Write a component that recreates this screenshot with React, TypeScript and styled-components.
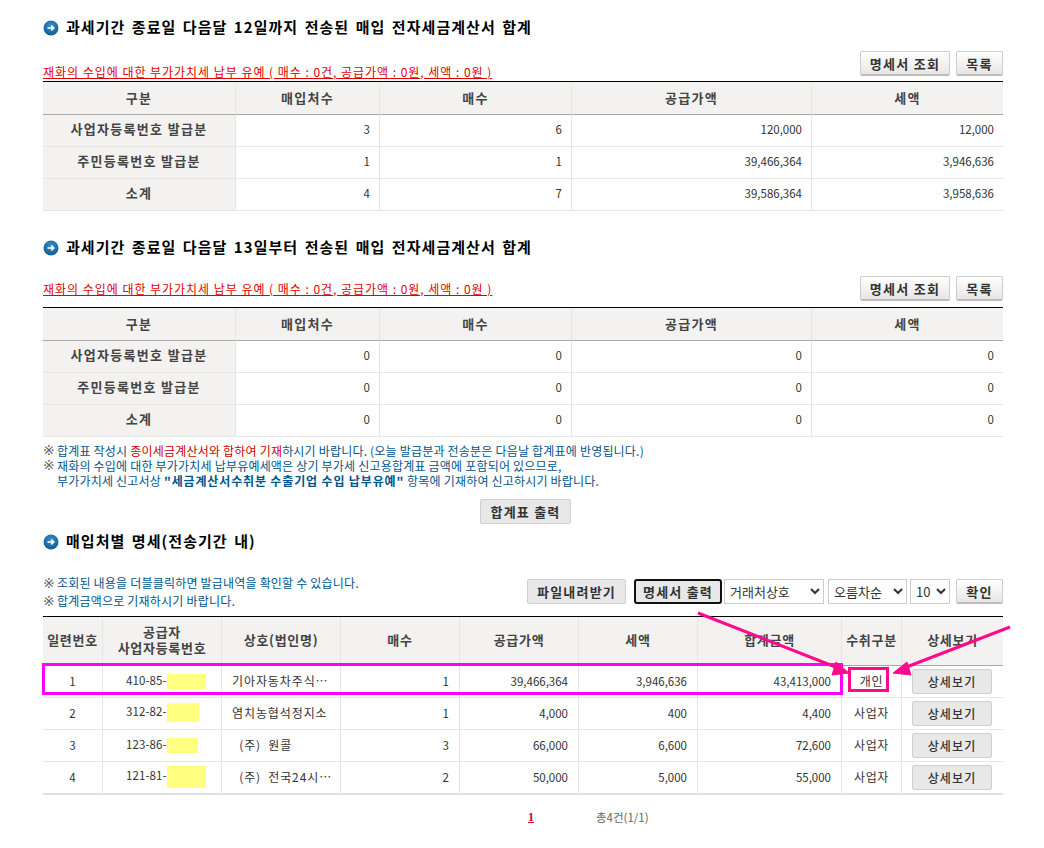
import React from "react";
import styled, { createGlobalStyle } from "styled-components";

const GlobalStyle = createGlobalStyle`
  html, body {
    margin: 0;
    padding: 0;
    background: #fff;
  }
  body {
    font-family: "Noto Sans CJK KR", "Liberation Sans", sans-serif;
    font-size: 12px;
    color: #333;
  }
`;

const Page = styled.div`
  position: relative;
  width: 1044px;
  height: 848px;
  padding: 19px 41px 0 43px;
  box-sizing: border-box;
  overflow: hidden;
`;

const Title = styled.h2<{ $top: number }>`
  display: flex;
  align-items: center;
  gap: 7px;
  height: 18px;
  margin: ${(p) => p.$top}px 0 0;
  font-size: 15px;
  font-weight: 700;
  color: #000;
  letter-spacing: 1.05px;
  word-spacing: 2px;
  white-space: nowrap;
`;

const TitleText = styled.span`
  line-height: 18px;
  padding-bottom: 3px;
`;

const Toolbar = styled.div<{ $top: number; $h: number; $align: string }>`
  display: flex;
  justify-content: space-between;
  align-items: ${(p) => p.$align};
  height: ${(p) => p.$h}px;
  margin-top: ${(p) => p.$top}px;
`;

const RedLink = styled.a`
  color: #e00000;
  text-decoration: underline;
  letter-spacing: 0.97px;
  line-height: 14px;
  white-space: nowrap;
`;

const Buttons = styled.div`
  display: flex;
  gap: 6px;
  align-self: flex-start;
`;

const Button = styled.button<{ $w: number; $ml?: number }>`
  width: ${(p) => p.$w}px;
  height: 25px;
  margin-left: ${(p) => p.$ml ?? 0}px;
  padding: 0;
  border: 1px solid #ccc;
  border-bottom: 2px solid #bbb;
  border-radius: 2px;
  background: linear-gradient(#fff, #e6e6e6);
  font: 700 13px "Noto Sans CJK KR", sans-serif;
  letter-spacing: 1.3px;
  color: #333;
`;

const FlatButton = styled.button<{ $w: number; $ml?: number; $focus?: boolean }>`
  width: ${(p) => p.$w}px;
  height: 25px;
  margin-left: ${(p) => p.$ml ?? 0}px;
  padding: 0;
  border: 1px solid #d0d0d0;
  border-radius: 2px;
  background: #e8e8e8;
  font: 700 13px "Noto Sans CJK KR", sans-serif;
  letter-spacing: 1.2px;
  color: #333;
  ${(p) => p.$focus && "border: 2px solid #111; border-radius: 3px; box-sizing: border-box;"}
`;

const Table = styled.table<{ $top?: number }>`
  width: 960px;
  margin-top: ${(p) => p.$top ?? 0}px;
  border-collapse: separate;
  border-spacing: 0;
  table-layout: fixed;
  border-top: 1px solid #000;
`;

const ListTable = styled(Table)`
  tbody tr:last-child td {
    border-bottom: 2px solid #e0e0e0;
  }
`;

const Th = styled.th<{ $h: number; $ls?: number; $lift: number }>`
  height: ${(p) => p.$h - p.$lift}px;
  padding: 0 0 ${(p) => p.$lift}px;
  background: #f3f2f0;
  border-right: 1px solid #e6e6e6;
  border-bottom: 1px solid #aaa;
  font-size: 13px;
  font-weight: 700;
  line-height: 16px;
  letter-spacing: ${(p) => p.$ls ?? 1.3}px;
  color: #444;
  white-space: nowrap;
  &:last-child {
    border-right: 0;
  }
`;

const RowHead = styled.th`
  height: 27px;
  padding: 0 0 4px;
  background: #f3f2f0;
  border-right: 1px solid #e6e6e6;
  border-bottom: 1px solid #e6e6e6;
  font-size: 13px;
  font-weight: 700;
  letter-spacing: 1.3px;
  color: #444;
`;

const Td = styled.td<{ $align?: string; $pad?: number; $lift?: number }>`
  height: ${(p) => 31 - (p.$lift ?? 2)}px;
  padding: 0 ${(p) => p.$pad ?? 0}px ${(p) => p.$lift ?? 2}px 0;
  text-align: ${(p) => p.$align ?? "right"};
  border-right: 1px solid #e6e6e6;
  border-bottom: 1px solid #e6e6e6;
  font-size: 11.5px;
  color: #333;
  white-space: nowrap;
  &:last-child {
    border-right: 0;
  }
`;

const BizCell = styled(Td)`
  padding-left: 23px;
  text-align: left;
  letter-spacing: 0.1px;
`;

const NameCell = styled(Td)`
  padding-left: 10px;
  text-align: left;
  font-size: 12px;
  letter-spacing: 0.9px;
  white-space: pre;
`;

const KindCell = styled(Td)`
  text-align: center;
  font-size: 12px;
  letter-spacing: 0.6px;
`;

const Mask = styled.span<{ $w: number; $h: number }>`
  display: inline-block;
  width: ${(p) => p.$w}px;
  height: ${(p) => p.$h}px;
  background: #ffff80;
  vertical-align: middle;
`;

const DetailButton = styled(FlatButton)`
  display: block;
  margin: 0 auto 0 10px;
  font-size: 12px;
  font-weight: 500;
  letter-spacing: 1.1px;
`;

const Notes = styled.div`
  margin-top: 6px;
  color: #00558c;
  line-height: 15px;
  letter-spacing: 0.2px;
  white-space: nowrap;
  b {
    letter-spacing: 0.85px;
  }
`;

const Note = styled.div`
  display: flex;
  align-items: center;
  height: 15px;
`;

const Mark = styled.span`
  flex: none;
  width: 14px;
  font-family: "DejaVu Sans", sans-serif;
  font-size: 14px;
  line-height: 15px;
  color: #666;
  letter-spacing: 0;
`;

const Indent = styled.div`
  height: 15px;
  padding-left: 14px;
`;

const RedText = styled.span`
  color: #d00000;
`;

const Center = styled.div`
  display: flex;
  justify-content: center;
  margin: 11px 0 0 5px;
`;

const ListBar = styled.div`
  display: flex;
  justify-content: space-between;
  align-items: center;
  margin-top: 28px;
  height: 28px;
`;

const ListNotes = styled(Notes)`
  margin: 0 0 2px;
  line-height: 18px;
`;

const ListNote = styled(Note)`
  height: 18px;
`;

const Controls = styled.div`
  display: flex;
  align-items: flex-start;
  align-self: flex-start;
`;

const Select = styled.select<{ $w: number; $ml: number }>`
  width: ${(p) => p.$w}px;
  height: 25px;
  margin-left: ${(p) => p.$ml}px;
  padding: 0 0 0 1px;
  border: 1px solid #ccc;
  border-radius: 0;
  background: #fff;
  font: 13px "Noto Sans CJK KR", sans-serif;
  color: #333;
`;

const Pager = styled.div`
  display: flex;
  align-items: center;
  height: 16px;
  margin: 14px 0 0 485px;
  gap: 62px;
`;

const PageNum = styled.a`
  font: 700 12px "Liberation Serif", serif;
  color: #d00030;
  text-decoration: underline;
`;

const Total = styled.span`
  font-size: 11.5px;
  color: #666;
`;

const HighlightRow = styled.div`
  position: absolute;
  left: 42px;
  top: 663px;
  width: 795px;
  height: 26px;
  border: 3px solid #ff00ff;
`;

const HighlightCell = styled.div`
  position: absolute;
  left: 848px;
  top: 667px;
  width: 35px;
  height: 19px;
  border: 3px solid #ff0a8c;
`;

const ArrowLayer = styled.svg`
  position: absolute;
  left: 0;
  top: 0;
  pointer-events: none;
`;

const Bullet = () => (
  <svg width="16" height="16" viewBox="0 0 16 16">
    <defs>
      <radialGradient id="ball" cx="50%" cy="35%" r="65%">
        <stop offset="0" stopColor="#3f8fca" />
        <stop offset="1" stopColor="#0d5a96" />
      </radialGradient>
    </defs>
    <circle cx="8" cy="8" r="7.5" fill="url(#ball)" />
    <path d="M4.5 8h6M8.2 5.6L10.8 8l-2.6 2.4" fill="none" stroke="#fff" strokeWidth="1.5" />
  </svg>
);

const Arrows = () => (
  <ArrowLayer width="1044" height="848">
    <g stroke="#ff0a8c" strokeWidth="3" fill="#ff0a8c">
      <line x1="698" y1="613" x2="838" y2="668" />
      <polygon points="849,673 836,662 832,675" strokeWidth="1" />
      <line x1="1010" y1="627" x2="904" y2="668" />
      <polygon points="893,673 907,662 911,675" strokeWidth="1" />
    </g>
  </ArrowLayer>
);

const summaryCols = [193, 144, 192, 240, 191];
const listCols = [60, 119, 119, 119, 119, 119, 144, 60, 101];

const firstRows = [
  ["사업자등록번호 발급분", "3", "6", "120,000", "12,000"],
  ["주민등록번호 발급분", "1", "1", "39,466,364", "3,946,636"],
  ["소계", "4", "7", "39,586,364", "3,958,636"],
];

const secondRows = [
  ["사업자등록번호 발급분", "0", "0", "0", "0"],
  ["주민등록번호 발급분", "0", "0", "0", "0"],
  ["소계", "0", "0", "0", "0"],
];

const listRows = [
  { no: "1", biz: "410-85-", w: 39, h: 15, name: "기아자동차주식…", qty: "1", amt: "39,466,364", tax: "3,946,636", sum: "43,413,000", kind: "개인" },
  { no: "2", biz: "312-82-", w: 32, h: 19, name: "염치농협석정지소", qty: "1", amt: "4,000", tax: "400", sum: "4,400", kind: "사업자" },
  { no: "3", biz: "123-86-", w: 31, h: 15, name: "  (주)  원콜", qty: "3", amt: "66,000", tax: "6,600", sum: "72,600", kind: "사업자" },
  { no: "4", biz: "121-81-", w: 39, h: 22, name: "  (주)  전국24시…", qty: "2", amt: "50,000", tax: "5,000", sum: "55,000", kind: "사업자" },
];

const listHeads = ["일련번호", "공급자\n사업자등록번호", "상호(법인명)", "매수", "공급가액", "세액", "합계금액", "수취구분", "상세보기"];

const Summary = ({ rows, top }: { rows: string[][]; top?: number }) => (
  <Table $top={top}>
    <colgroup>
      {summaryCols.map((w, i) => (
        <col key={i} width={w} />
      ))}
    </colgroup>
    <thead>
      <tr>
        {["구분", "매입처수", "매수", "공급가액", "세액"].map((h) => (
          <Th key={h} $h={32} $lift={0}>
            {h}
          </Th>
        ))}
      </tr>
    </thead>
    <tbody>
      {rows.map((r) => (
        <tr key={r[0]}>
          <RowHead>{r[0]}</RowHead>
          {r.slice(1).map((v, i) => (
            <Td key={i} $pad={9} $lift={4}>
              {v}
            </Td>
          ))}
        </tr>
      ))}
    </tbody>
  </Table>
);

const redNotice = "재화의 수입에 대한 부가가치세 납부 유예 ( 매수 : 0건, 공급가액 : 0원, 세액 : 0원 )";

export default function App() {
  return (
    <Page>
      <GlobalStyle />
      <Title $top={0}>
        <Bullet />
        <TitleText>과세기간 종료일 다음달 12일까지 전송된 매입 전자세금계산서 합계</TitleText>
      </Title>
      <Toolbar $top={14} $h={28} $align="flex-end">
        <RedLink>{redNotice}</RedLink>
        <Buttons>
          <Button $w={90}>명세서 조회</Button>
          <Button $w={47}>목록</Button>
        </Buttons>
      </Toolbar>
      <Summary rows={firstRows} top={2} />

      <Title $top={28}>
        <Bullet />
        <TitleText>과세기간 종료일 다음달 13일부터 전송된 매입 전자세금계산서 합계</TitleText>
      </Title>
      <Toolbar $top={19} $h={25} $align="center">
        <RedLink>{redNotice}</RedLink>
        <Buttons>
          <Button $w={90}>명세서 조회</Button>
          <Button $w={47}>목록</Button>
        </Buttons>
      </Toolbar>
      <Summary rows={secondRows} top={6} />

      <Notes>
        <Note>
          <Mark>※</Mark>
          <span>
            합계표 작성시 <RedText>종이세금계산서와 합하여 기재</RedText>하시기 바랍니다. (오늘 발급분과 전송분은 다음날 합계표에 반영됩니다.)
          </span>
        </Note>
        <Note>
          <Mark>※</Mark>
          <span>재화의 수입에 대한 부가가치세 납부유예세액은 상기 부가세 신고용합계표 금액에 포함되어 있으므로,</span>
        </Note>
        <Indent>
          부가가치세 신고서상 <b>"세금계산서수취분 수출기업 수입 납부유예"</b> 항목에 기재하여 신고하시기 바랍니다.
        </Indent>
      </Notes>
      <Center>
        <FlatButton $w={91}>합계표 출력</FlatButton>
      </Center>

      <Title $top={9}>
        <Bullet />
        <TitleText>매입처별 명세(전송기간 내)</TitleText>
      </Title>
      <ListBar>
        <ListNotes>
          <ListNote>
            <Mark>※</Mark>
            <span>조회된 내용을 더블클릭하면 발급내역을 확인할 수 있습니다.</span>
          </ListNote>
          <ListNote>
            <Mark>※</Mark>
            <span>합계금액으로 기재하시기 바랍니다.</span>
          </ListNote>
        </ListNotes>
        <Controls>
          <FlatButton $w={99}>파일내려받기</FlatButton>
          <FlatButton $w={88} $ml={8} $focus>
            명세서 출력
          </FlatButton>
          <Select $w={100} $ml={2}>
            <option>거래처상호</option>
          </Select>
          <Select $w={79} $ml={4}>
            <option>오름차순</option>
          </Select>
          <Select $w={40} $ml={3}>
            <option>10</option>
          </Select>
          <Button $w={47} $ml={6}>
            확인
          </Button>
        </Controls>
      </ListBar>

      <ListTable $top={9}>
        <colgroup>
          {listCols.map((w, i) => (
            <col key={i} width={w} />
          ))}
        </colgroup>
        <thead>
          <tr>
            {listHeads.map((h) => {
              const [first, second] = h.split("\n");
              return (
                <Th key={h} $h={48} $ls={0.7} $lift={2}>
                  {first}
                  {second && <br />}
                  {second}
                </Th>
              );
            })}
          </tr>
        </thead>
        <tbody>
          {listRows.map((r) => (
            <tr key={r.no}>
              <Td $align="center">{r.no}</Td>
              <BizCell>
                {r.biz}
                <Mask $w={r.w} $h={r.h} />
              </BizCell>
              <NameCell>{r.name}</NameCell>
              <Td $pad={10}>{r.qty}</Td>
              <Td $pad={10}>{r.amt}</Td>
              <Td $pad={10}>{r.tax}</Td>
              <Td $pad={10}>{r.sum}</Td>
              <KindCell>{r.kind}</KindCell>
              <Td $align="left" $lift={0}>
                <DetailButton $w={80}>상세보기</DetailButton>
              </Td>
            </tr>
          ))}
        </tbody>
      </ListTable>
      <Pager>
        <PageNum>1</PageNum>
        <Total>총4건(1/1)</Total>
      </Pager>

      <HighlightRow />
      <HighlightCell />
      <Arrows />
    </Page>
  );
}
